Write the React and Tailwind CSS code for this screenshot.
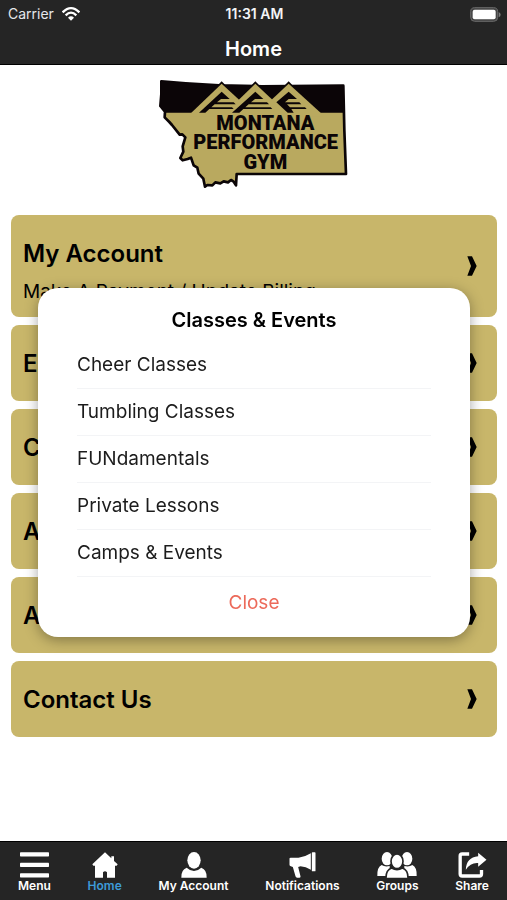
const cards = [
    { title: "My Account", desc: "Make A Payment / Update Billing" },
    { title: "Enroll" },
    { title: "Classes" },
    { title: "About Us" },
    { title: "Athletes" },
    { title: "Contact Us" },
];

const classLinks = ["Cheer Classes", "Tumbling Classes", "FUNdamentals", "Private Lessons", "Camps & Events"];

function WifiIcon() {
    return (
        <svg viewBox="0 0 54 42" className="w-[18px] h-3.5" fill="none" stroke="white" strokeWidth="7">
            <path d="M2 16 Q27 -9 52 16" />
            <path d="M11 25 Q27 9 43 25" />
            <path d="M27 41 L18 32 Q27 24 36 32 Z" fill="white" stroke="none" />
        </svg>
    );
}

function BatteryIcon() {
    return (
        <svg viewBox="0 0 93 45" className="w-[31px] h-[15px]">
            <rect x="2" y="2" width="81" height="41" rx="12" fill="#454545" stroke="#6a6a6a" strokeWidth="3" />
            <rect x="8" y="8" width="69" height="29" rx="6" fill="white" />
            <path d="M86 15 Q92 18 92 23 Q92 28 86 31 Z" fill="#7a7a7a" />
        </svg>
    );
}

function Logo() {
    return (
        <svg viewBox="0 0 630 375" className="w-[210px] h-[125px]" role="img" aria-label="Montana Performance Gym">
            <path
                d="M37 34 L110 40 L210 46 L340 49 L583 47 L586 180 L591 312 L263 312 L261 346 L254 335 L246 330 L237 337 L224 334 L214 340 L199 337 L190 346 L175 345 L168 350 L163 326 L149 311 L145 293 L134 286 L126 263 L116 267 L101 271 L94 264 L103 245 L101 229 L109 202 L100 193 L92 194 L69 165 L61 156 L47 142 L48 125 L34 108 L37 72 Z"
                fill="#b9a95f"
                stroke="#0b0507"
                strokeWidth="8"
                strokeLinejoin="round"
            />
            <path d="M37 34 L110 40 L210 46 L340 49 L583 47 L586 128 L48 128 L34 108 Z" fill="#0b0507" />
            {/* Mountain peaks */}
            <path d="M204 48 L218 34 L232 48 Z M305 48 L319 34 L333 48 Z M405 48 L419 34 L433 48 Z" fill="#0b0507" />
            <g fill="#b9a95f">
                <path d="M323 131 L419 41 L518 131 Z" />
                <path d="M226 131 L319 41 L415 131 Z" />
                <path d="M124 131 L218 41 L316 131 Z" />
            </g>
            <path d="M120 129 H524 V140 H120 Z" fill="#b9a95f" />
            <g fill="#0b0507">
                <path d="M150 128 L218 65 L242 87 H216 L204 97 H254 L260 103 H197 L187 112 H249 L254 117 H181 L169 128 Z" />
                <path d="M249 128 L319 65 L343 87 H318 L306 97 H354 L360 103 H299 L289 112 H365 L370 117 H283 L271 128 Z" />
                <path d="M382 97 L419 65 L444 87 H419 L408 97 H451 L457 103 H414 L423 112 H468 L473 117 H427 L434 128 H416 Z" />
            </g>
            <g fill="#0b0507" fontFamily="Roboto, sans-serif" fontWeight="900" textAnchor="middle">
                <text x="349" y="181" fontSize="60">MONTANA</text>
                <text x="350" y="238" fontSize="60">PERFORMANCE</text>
                <text x="349" y="296" fontSize="60">GYM</text>
            </g>
        </svg>
    );
}

function Chevron() {
    return (
        <svg viewBox="0 0 30 60" className="w-2.5 h-5 shrink-0">
            <path d="M1 1 H15 L29 30 L15 59 H1 L12 30 Z" fill="black" />
        </svg>
    );
}

function MenuIcon() {
    return (
        <svg viewBox="0 0 88 78" className="w-[29px] h-[26px]" fill="white">
            <rect y="0" width="88" height="13" rx="2" />
            <rect y="32" width="88" height="13" rx="2" />
            <rect y="64" width="88" height="13" rx="2" />
        </svg>
    );
}

function HomeIcon() {
    return (
        <svg viewBox="0 0 78 78" className="w-[26px] h-[26px]" fill="white">
            <path d="M39 1 L58 19 V13 H66 V27 L77 37 L74 41 H69 V77 H45 V61 Q39 55 33 61 V77 H9 V41 H4 L1 37 Z" />
        </svg>
    );
}

function UserIcon() {
    return (
        <svg viewBox="0 0 78 78" className="w-[26px] h-[26px]" fill="white">
            <ellipse cx="39" cy="25" rx="20" ry="25" />
            <path d="M1 77 Q0 53 17 47 Q28 57 39 57 Q50 57 61 47 Q78 53 77 77 Z" />
        </svg>
    );
}

function MegaphoneIcon() {
    return (
        <svg viewBox="0 0 80 78" className="w-[27px] h-[26px]" fill="white">
            <path d="M1 21 Q0 17 5 17 L28 17 Q48 15 65 4 V53 Q50 44 34 43 L27 45 L34 73 Q35 77 31 77 L24 77 Q20 77 19 73 L11 45 L5 43 Q1 42 1 38 Z" />
            <rect x="68" y="1" width="11" height="57" rx="2" />
        </svg>
    );
}

function GroupIcon() {
    return (
        <svg viewBox="0 0 120 78" className="w-10 h-[26px]" fill="white">
            <ellipse cx="30" cy="20" rx="16" ry="20" />
            <ellipse cx="90" cy="20" rx="16" ry="20" />
            <path d="M1 72 Q0 45 14 39 Q24 46 38 42 V72 Z" />
            <path d="M119 72 Q120 45 106 39 Q96 46 82 42 V72 Z" />
            <g stroke="#252525" strokeWidth="5">
                <path d="M27 80 Q26 54 44 48 Q60 58 76 48 Q94 54 93 80 Z" />
                <ellipse cx="60" cy="28" rx="18" ry="22" />
            </g>
        </svg>
    );
}

function ShareIcon() {
    return (
        <svg viewBox="0 0 86 78" className="w-[29px] h-[26px]">
            <path d="M33 6 H12 Q6 6 6 12 V66 Q6 72 12 72 H64 Q70 72 70 66 V54" fill="none" stroke="white" strokeWidth="10" />
            <path d="M60 2 L85 23 L60 44 V33 Q37 31 23 53 Q24 17 60 13 Z" fill="white" />
        </svg>
    );
}

const tabs = [
    { label: "Menu", icon: <MenuIcon /> },
    { label: "Home", icon: <HomeIcon />, active: true },
    { label: "My Account", icon: <UserIcon /> },
    { label: "Notifications", icon: <MegaphoneIcon /> },
    { label: "Groups", icon: <GroupIcon /> },
    { label: "Share", icon: <ShareIcon /> },
];

export default function App() {
    return (
        <div className="min-h-screen flex flex-col bg-white text-black font-['Inter',sans-serif]">
            <header className="bg-[#252525] text-white border-b border-black">
                <div className="grid grid-cols-3 items-center h-7 pl-2 pr-1.5 text-sm">
                    <div className="flex items-center gap-2 text-gray-200">
                        Carrier <WifiIcon />
                    </div>
                    <span className="text-center font-semibold text-gray-100">11:31 AM</span>
                    <div className="flex justify-end"><BatteryIcon /></div>
                </div>
                <h1 className="h-9 pt-[5px] text-center text-xl leading-8 font-semibold">Home</h1>
            </header>

            <main className="pl-[11px] pr-2.5 pt-[5px] pb-8">
                <div className="flex justify-center mb-5"><Logo /></div>
                <div className="flex flex-col gap-2">
                    {cards.map((card) => (
                        <button
                            key={card.title}
                            className="w-full pl-3 pr-5 flex items-center justify-between rounded-lg bg-[#c8b66a] text-left"
                        >
                            <span className={card.desc ? "pt-[23px] pb-[9px]" : "pt-[23px] pb-[21px]"}>
                                <span className="block text-2xl leading-8 font-semibold">{card.title}</span>
                                {card.desc && <span className="block mt-1.5 text-[19px] leading-8">{card.desc}</span>}
                            </span>
                            <Chevron />
                        </button>
                    ))}
                </div>
            </main>

            <nav className="mt-auto h-[59px] px-[18px] pt-2.5 flex justify-between items-start bg-[#252525] text-white border-t border-black">
                {tabs.map((tab) => (
                    <a key={tab.label} href="#" className="flex flex-col items-center">
                        {tab.icon}
                        <span className={tab.active ? "text-xs leading-4 font-semibold text-[#3d9bd8]" : "text-xs leading-4 font-semibold"}>
                            {tab.label}
                        </span>
                    </a>
                ))}
            </nav>

            {/* Classes & Events popup */}
            <div className="fixed inset-0 pt-6 pl-[38px] pr-[37px] flex items-center">
                <div role="dialog" aria-labelledby="popup-title" className="w-full pt-4 pb-2 px-[39px] rounded-[20px] bg-white shadow-[0_3px_14px_rgba(0,0,0,0.35)]">
                    <h2 id="popup-title" className="mb-1.5 text-center text-xl leading-8 font-semibold">Classes &amp; Events</h2>
                    <ul>
                        {classLinks.map((name) => (
                            <li key={name} className="border-b border-gray-100">
                                <a href="#" className="block text-[19px] leading-[46px] text-[#1c1c1c]">{name}</a>
                            </li>
                        ))}
                    </ul>
                    <button className="block w-full text-[19px] leading-[52px] text-[#ec6a5a]">Close</button>
                </div>
            </div>
        </div>
    );
}
